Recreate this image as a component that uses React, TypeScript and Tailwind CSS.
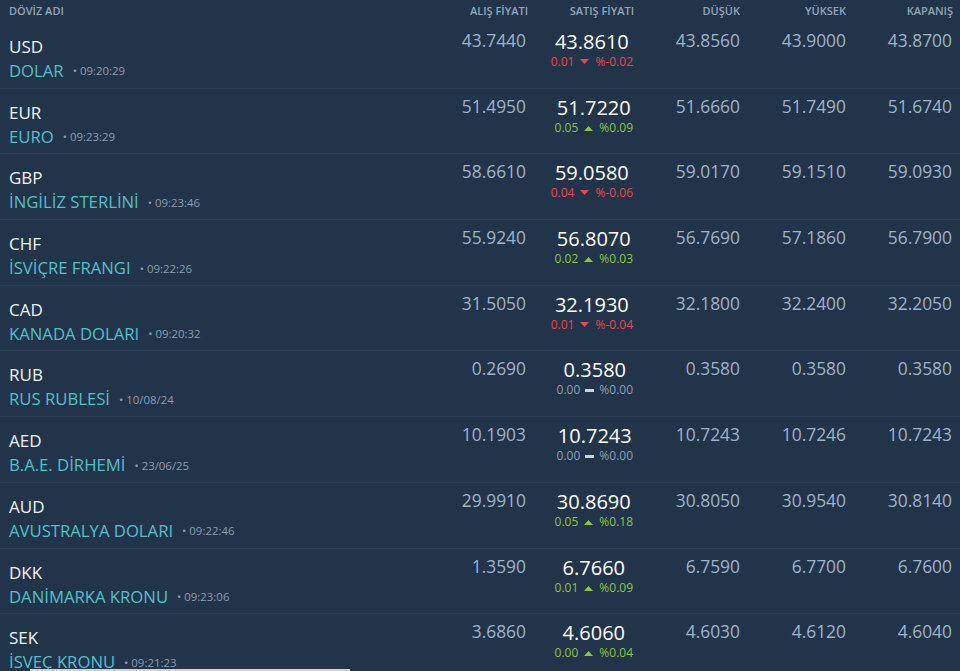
import React from "react";

type Row = {
  code: string;
  name: string;
  time: string;
  buy: string;
  sell: string;
  chg: string;
  pct: string;
  dir: "up" | "down" | "flat";
  low: string;
  high: string;
  close: string;
};

const rows: Row[] = [
  { code: "USD", name: "DOLAR", time: "09:20:29", buy: "43.7440", sell: "43.8610", chg: "0.01", pct: "%-0.02", dir: "down", low: "43.8560", high: "43.9000", close: "43.8700" },
  { code: "EUR", name: "EURO", time: "09:23:29", buy: "51.4950", sell: "51.7220", chg: "0.05", pct: "%0.09", dir: "up", low: "51.6660", high: "51.7490", close: "51.6740" },
  { code: "GBP", name: "İNGİLİZ STERLİNİ", time: "09:23:46", buy: "58.6610", sell: "59.0580", chg: "0.04", pct: "%-0.06", dir: "down", low: "59.0170", high: "59.1510", close: "59.0930" },
  { code: "CHF", name: "İSVİÇRE FRANGI", time: "09:22:26", buy: "55.9240", sell: "56.8070", chg: "0.02", pct: "%0.03", dir: "up", low: "56.7690", high: "57.1860", close: "56.7900" },
  { code: "CAD", name: "KANADA DOLARI", time: "09:20:32", buy: "31.5050", sell: "32.1930", chg: "0.01", pct: "%-0.04", dir: "down", low: "32.1800", high: "32.2400", close: "32.2050" },
  { code: "RUB", name: "RUS RUBLESİ", time: "10/08/24", buy: "0.2690", sell: "0.3580", chg: "0.00", pct: "%0.00", dir: "flat", low: "0.3580", high: "0.3580", close: "0.3580" },
  { code: "AED", name: "B.A.E. DİRHEMİ", time: "23/06/25", buy: "10.1903", sell: "10.7243", chg: "0.00", pct: "%0.00", dir: "flat", low: "10.7243", high: "10.7246", close: "10.7243" },
  { code: "AUD", name: "AVUSTRALYA DOLARI", time: "09:22:46", buy: "29.9910", sell: "30.8690", chg: "0.05", pct: "%0.18", dir: "up", low: "30.8050", high: "30.9540", close: "30.8140" },
  { code: "DKK", name: "DANİMARKA KRONU", time: "09:23:06", buy: "1.3590", sell: "6.7660", chg: "0.01", pct: "%0.09", dir: "up", low: "6.7590", high: "6.7700", close: "6.7600" },
  { code: "SEK", name: "İSVEÇ KRONU", time: "09:21:23", buy: "3.6860", sell: "4.6060", chg: "0.00", pct: "%0.04", dir: "up", low: "4.6030", high: "4.6120", close: "4.6040" },
];

function Change({ r }: { r: Row }) {
  if (r.dir === "down") {
    return (
      <div className="flex items-center gap-[6px] text-[12px] leading-[16px] text-[#e8474c]">
        <span>{r.chg}</span>
        <svg width="9" height="6" viewBox="0 0 9 6"><path d="M0 0 L9 0 L4.5 5 Z" fill="#e8474c" /></svg>
        <span>{r.pct}</span>
      </div>
    );
  }
  if (r.dir === "up") {
    return (
      <div className="flex items-center gap-[6px] text-[12px] leading-[16px] text-[#8cc63f]">
        <span>{r.chg}</span>
        <svg width="9" height="6" viewBox="0 0 9 6"><path d="M0 6 L9 6 L4.5 1 Z" fill="#8cc63f" /></svg>
        <span>{r.pct}</span>
      </div>
    );
  }
  return (
    <div className="flex items-center gap-[5px] text-[12px] leading-[16px] text-[#8d9fb4]">
      <span>{r.chg}</span>
      <span className="inline-block w-[9px] h-[3px] bg-[#c9d3de]" />
      <span>{r.pct}</span>
    </div>
  );
}

export default function App() {
  return (
    <div
      className="w-[960px] min-h-[671px] bg-[#223449] overflow-hidden relative"
      style={{ fontFamily: '"Open Sans", "Noto Sans", sans-serif' }}
    >
      <div className="flex h-[23px] items-center text-[11px] font-semibold text-[#93a5bb] uppercase">
        <div className="flex-1 pl-[9px]">DÖVİZ ADI</div>
        <div className="w-[106px] text-right pr-[8px]">ALIŞ FİYATI</div>
        <div className="w-[106px] text-right pr-[8px]">SATIŞ FİYATI</div>
        <div className="w-[106px] text-right pr-[8px]">DÜŞÜK</div>
        <div className="w-[106px] text-right pr-[8px]">YÜKSEK</div>
        <div className="w-[106px] text-right pr-[7px]">KAPANIŞ</div>
      </div>
      {rows.map((r) => (
        <div key={r.code} className="flex h-[65.7px] border-b border-[#293c52]">
          <div className="flex-1 pl-[9px] pt-[12px]">
            <div className="text-[17px] leading-[24px] text-[#eef2f6]">{r.code}</div>
            <div className="flex items-center">
              <span className="text-[16.7px] leading-[24px] text-[#52c0cb]">{r.name}</span>
              <span className="ml-[9px] text-[11.4px] text-[#8d9db0]">• {r.time}</span>
            </div>
          </div>
          <div className="w-[106px] text-right pr-[10px] pt-[6px] text-[17.4px] leading-[22px] text-[#9fb2c7]">{r.buy}</div>
          <div className="w-[106px] flex justify-end pr-[9px] pt-[7px]">
            <div className="flex flex-col items-center">
              <div className="text-[20px] leading-[24px] text-white">{r.sell}</div>
              <Change r={r} />
            </div>
          </div>
          <div className="w-[106px] text-right pr-[8px] pt-[6px] text-[17.4px] leading-[22px] text-[#9fb2c7]">{r.low}</div>
          <div className="w-[106px] text-right pr-[8px] pt-[6px] text-[17.4px] leading-[22px] text-[#9fb2c7]">{r.high}</div>
          <div className="w-[106px] text-right pr-[8px] pt-[6px] text-[17.4px] leading-[22px] text-[#9fb2c7]">{r.close}</div>
        </div>
      ))}
      <div className="fixed left-[30px] top-[669px] w-[320px] h-[2px] bg-[#cfd2d6]" />
    </div>
  );
}
